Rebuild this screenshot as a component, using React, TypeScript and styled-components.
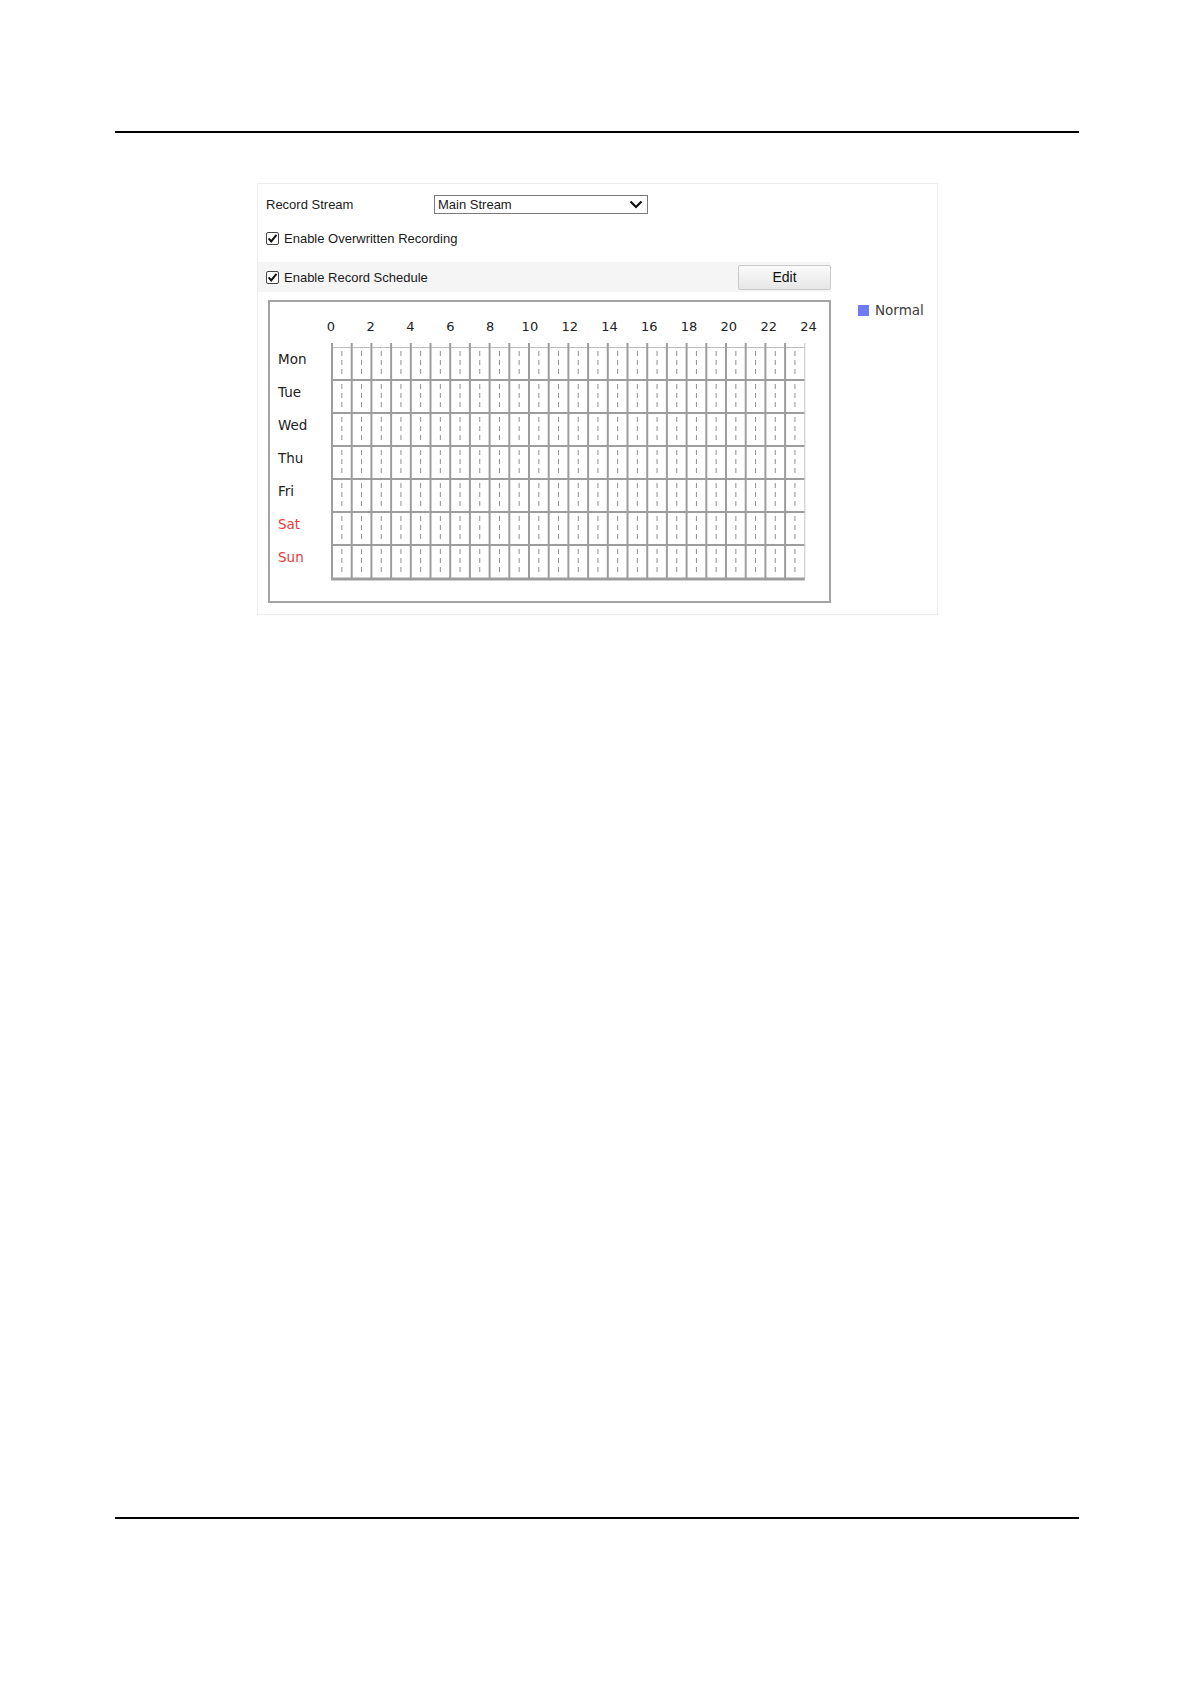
import styled, { createGlobalStyle } from 'styled-components'

const GlobalStyle = createGlobalStyle`
  html, body {
    margin: 0;
    padding: 0;
    background: #ffffff;
  }
  body {
    font-family: "Liberation Sans", Arial, sans-serif;
    color: #1a1a1a;
  }
`

const HOUR = 19.7
const ROW = 33
const TICK = 4
const days = ['Mon', 'Tue', 'Wed', 'Thu', 'Fri', 'Sat', 'Sun']
const hourLabels = Array.from({ length: 13 }, (_, i) => i * 2)

const Page = styled.div`
  width: 1181px;
  height: 1685px;
  display: flex;
  flex-direction: column;
`

const Rule = styled.div<{ top: number }>`
  margin: ${p => p.top}px 0 0 115px;
  width: 964px;
  height: 2px;
  background: #000;
`

const Panel = styled.div`
  margin: 50px 0 0 257px;
  width: 681px;
  box-sizing: border-box;
  border: 1px solid #ececec;
  padding: 11px 0 11px 0;
  display: flex;
  flex-direction: column;
`

const FieldRow = styled.div`
  display: flex;
  align-items: center;
  height: 18px;
  padding-left: 8px;
  font-size: 13px;
`

const FieldLabel = styled.div`
  width: 168px;
`

const SelectBox = styled.div`
  width: 214px;
  height: 19px;
  box-sizing: border-box;
  border: 1px solid #7a7a7a;
  display: flex;
  align-items: center;
  justify-content: space-between;
  padding: 0 4px 0 3px;
  font-size: 13px;
  background: #fff;
`

const CheckRow = styled.label`
  display: flex;
  align-items: center;
  gap: 5px;
  height: 18px;
  margin-top: 16px;
  padding-left: 8px;
  font-size: 13px;
`

const Band = styled.div`
  display: flex;
  align-items: center;
  justify-content: space-between;
  width: 573px;
  height: 30px;
  margin-top: 15px;
  padding-left: 8px;
  box-sizing: border-box;
  background: #f5f5f5;
  font-size: 13px;
`

const BandLabel = styled.div`
  display: flex;
  align-items: center;
  gap: 5px;
`

const EditButton = styled.button`
  width: 93px;
  height: 25px;
  border: 1px solid #c9c9c9;
  border-radius: 2px;
  background: linear-gradient(#fbfbfb, #e6e6e6);
  font-family: "Liberation Sans", Arial, sans-serif;
  font-size: 14px;
  color: #111;
  padding: 0;
`

const ScheduleArea = styled.div`
  display: flex;
  align-items: flex-start;
  gap: 27px;
  margin-top: 8px;
  padding-left: 10px;
`

const GridBox = styled.div`
  width: 563px;
  box-sizing: border-box;
  border: 2px solid #a3a3a3;
  padding-bottom: 20px;
  font-family: "DejaVu Sans", Verdana, sans-serif;
  font-size: 13px;
  color: #222;
`

const HourRow = styled.div`
  display: flex;
  height: 41px;
  padding: 17px 0 0 41px;
  box-sizing: border-box;
  line-height: 16px;
`

const HourLabel = styled.div`
  width: 39.8px;
  flex: none;
  text-align: center;
`

const Body = styled.div`
  display: flex;
`

const DayColumn = styled.div`
  width: 61px;
  padding-top: ${TICK}px;
  display: flex;
  flex-direction: column;
`

const DayLabel = styled.div<{ weekend?: boolean }>`
  height: ${ROW}px;
  box-sizing: border-box;
  padding: 0 0 10px 8px;
  display: flex;
  align-items: center;
  font-size: 13.5px;
  color: ${p => (p.weekend ? '#e83a3a' : '#222')};
`

const Legend = styled.div`
  display: flex;
  align-items: center;
  gap: 6px;
  margin-top: 2px;
  font-family: "DejaVu Sans", Verdana, sans-serif;
  font-size: 13.5px;
  color: #3c3c3c;
`

const Swatch = styled.span`
  width: 11px;
  height: 11px;
  background: #6d7cf6;
`

const CheckBox = () => (
  <svg width="13" height="13" viewBox="0 0 13 13">
    <rect x="0.5" y="0.5" width="12" height="12" rx="1.5" fill="#fff" stroke="#444" />
    <polyline points="2.6,6.4 5.2,9.5 10.5,2.9" fill="none" stroke="#111" strokeWidth="2" />
  </svg>
)

const Chevron = () => (
  <svg width="14" height="9" viewBox="0 0 14 9">
    <polyline points="1.5,1.5 7,7 12.5,1.5" fill="none" stroke="#111" strokeWidth="2.2" />
  </svg>
)

const ScheduleGrid = () => {
  const width = 24 * HOUR + 3
  const bottom = TICK + ROW * 7
  const height = bottom + 3
  const hours = Array.from({ length: 25 }, (_, i) => i)
  return (
    <svg width={width} height={height}>
      {days.map((_, r) =>
        hours.slice(0, 24).map(h => (
          <line
            key={`d${r}-${h}`}
            x1={1 + h * HOUR + HOUR / 2}
            x2={1 + h * HOUR + HOUR / 2}
            y1={TICK + r * ROW + 4}
            y2={TICK + (r + 1) * ROW - 3}
            stroke="#8f8f8f"
            strokeWidth="1"
            strokeDasharray="5 4"
          />
        ))
      )}
      <line x1="1" x2={1 + 24 * HOUR} y1={TICK + 0.5} y2={TICK + 0.5} stroke="#bdbdbd" strokeWidth="1" />
      {days.slice(1).map((_, r) => (
        <line
          key={`r${r}`}
          x1="1"
          x2={1 + 24 * HOUR}
          y1={TICK + (r + 1) * ROW}
          y2={TICK + (r + 1) * ROW}
          stroke="#9d9d9d"
          strokeWidth="2"
        />
      ))}
      {hours.map(h => (
        <line
          key={`v${h}`}
          x1={1 + h * HOUR}
          x2={1 + h * HOUR}
          y1={0}
          y2={bottom}
          stroke={h === 24 ? '#c4c4c4' : '#9d9d9d'}
          strokeWidth={h === 24 ? 1 : 2}
        />
      ))}
      <line x1="0" x2={1 + 24 * HOUR} y1={bottom + 1} y2={bottom + 1} stroke="#9d9d9d" strokeWidth="3" />
    </svg>
  )
}

export default function App() {
  return (
    <Page>
      <GlobalStyle />
      <Rule top={131} />
      <Panel>
        <FieldRow>
          <FieldLabel>Record Stream</FieldLabel>
          <SelectBox>
            <span>Main Stream</span>
            <Chevron />
          </SelectBox>
        </FieldRow>
        <CheckRow>
          <CheckBox />
          <span>Enable Overwritten Recording</span>
        </CheckRow>
        <Band>
          <BandLabel>
            <CheckBox />
            <span>Enable Record Schedule</span>
          </BandLabel>
          <EditButton>Edit</EditButton>
        </Band>
        <ScheduleArea>
          <GridBox>
            <HourRow>
              {hourLabels.map(h => (
                <HourLabel key={h}>{h}</HourLabel>
              ))}
            </HourRow>
            <Body>
              <DayColumn>
                {days.map(d => (
                  <DayLabel key={d} weekend={d === 'Sat' || d === 'Sun'}>
                    {d}
                  </DayLabel>
                ))}
              </DayColumn>
              <ScheduleGrid />
            </Body>
          </GridBox>
          <Legend>
            <Swatch />
            <span>Normal</span>
          </Legend>
        </ScheduleArea>
      </Panel>
      <Rule top={902} />
    </Page>
  )
}
